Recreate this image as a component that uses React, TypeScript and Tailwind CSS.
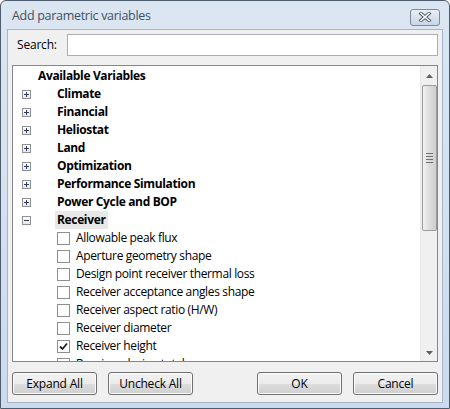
import React from 'react';

const font = { fontFamily: '"Segoe UI", "Open Sans", "Noto Sans", sans-serif' };

const categories = [
  'Climate',
  'Financial',
  'Heliostat',
  'Land',
  'Optimization',
  'Performance Simulation',
  'Power Cycle and BOP',
];

const receiverVars: { label: string; checked?: boolean }[] = [
  { label: 'Allowable peak flux' },
  { label: 'Aperture geometry shape' },
  { label: 'Design point receiver thermal loss' },
  { label: 'Receiver acceptance angles shape' },
  { label: 'Receiver aspect ratio (H/W)' },
  { label: 'Receiver diameter' },
  { label: 'Receiver height', checked: true },
  { label: 'Receiver design total ...' },
];

function ExpandBox({ open }: { open?: boolean }) {
  return (
    <span className="w-[9px] h-[9px] border border-[#919191] bg-gradient-to-b from-white to-[#e6e6e6] relative flex items-center justify-center">
      <span className="absolute w-[5px] h-px bg-[#2a3a5c]" />
      {!open && <span className="absolute w-px h-[5px] bg-[#2a3a5c]" />}
    </span>
  );
}

function CheckBox({ checked }: { checked?: boolean }) {
  return (
    <span className="w-[13px] h-[13px] border border-[#8e8f8f] bg-white flex items-center justify-center">
      {checked && (
        <svg width="9" height="9" viewBox="0 0 9 9">
          <path d="M1 4.5 L3.5 7 L8 1.5" fill="none" stroke="#1e1e1e" strokeWidth="1.8" />
        </svg>
      )}
    </span>
  );
}

function Button({ children }: { children: React.ReactNode }) {
  return (
    <button className="w-[85px] h-[23px] rounded-[3px] border border-[#707070] text-[12px] tracking-[-0.2px] text-black flex items-center justify-center bg-[linear-gradient(to_bottom,#f2f2f2_0%,#ebebeb_50%,#dddddd_50%,#cfcfcf_100%)] shadow-[inset_0_0_0_1px_#fbfbfb]">
      {children}
    </button>
  );
}

export default function App() {
  return (
    <div className="w-[450px] h-[409px] overflow-hidden bg-white" style={font}>
      <div className="w-[450px] h-[409px] rounded-t-[6px] border border-[#4e5d6e] bg-gradient-to-b from-[#dbe6f2] to-[#cbdbed] flex flex-col">
        {/* Title bar */}
        <div className="h-[28px] flex items-center justify-between pl-[11px] pr-[9px]">
          <span className="text-[12.5px] tracking-[-0.3px] text-[#425063] pt-[2px]">Add parametric variables</span>
          <span className="w-[30px] h-[17px] mt-[4px] rounded-[3px] border border-[#7d8a9b] bg-gradient-to-b from-[#e8eef6] to-[#c9d6e5] flex items-center justify-center">
            <svg width="14" height="10" viewBox="0 0 14 10">
              <path d="M3 1.5 L11 8.5 M11 1.5 L3 8.5" stroke="#4a5564" strokeWidth="3.4" strokeLinecap="square" />
              <path d="M3 1.5 L11 8.5 M11 1.5 L3 8.5" stroke="#ffffff" strokeWidth="1.6" strokeLinecap="square" />
            </svg>
          </span>
        </div>

        {/* Client area */}
        <div className="mx-[6px] mb-[5px] flex-1 border border-[#a6b6c8] bg-[#f0f0f0] flex flex-col pl-[4px] pr-[4px]">
          {/* Search */}
          <div className="flex items-center h-[27px] mt-px">
            <span className="w-[55px] pl-[5px] text-[12px] tracking-[-0.2px] text-black">Search:</span>
            <div className="flex-1 h-[22px] border border-[#abadb3] bg-white" />
          </div>

          {/* Tree */}
          <div className="mt-[7px] h-[297px] border border-[#828790] bg-white flex overflow-hidden">
            <div className="flex-1 pt-px overflow-hidden text-[12px] tracking-[-0.35px] text-black">
              <div className="h-[18px] flex items-center pl-[25px] font-bold">Available Variables</div>
              {categories.map(c => (
                <div key={c} className="h-[18px] flex items-center">
                  <span className="w-[44px] pl-[9px] flex"><ExpandBox /></span>
                  <span className="font-bold">{c}</span>
                </div>
              ))}
              <div className="h-[18px] flex items-center">
                <span className="w-[42px] pl-[9px] flex"><ExpandBox open /></span>
                <span className="font-bold bg-[#e8e8e8] h-[18px] px-[2px] flex items-center">Receiver</span>
              </div>
              {receiverVars.map(v => (
                <div key={v.label} className="h-[18px] flex items-center pl-[44px] gap-[6px]">
                  <CheckBox checked={v.checked} />
                  <span>{v.label}</span>
                </div>
              ))}
            </div>

            {/* Scrollbar */}
            <div className="w-[17px] bg-[#f0f0f0] border-l border-[#e8e8e8] flex flex-col items-center">
              <div className="h-[19px] flex items-center justify-center">
                <svg width="7" height="4" viewBox="0 0 7 4"><path d="M0 4 L3.5 0 L7 4 Z" fill="#606060" /></svg>
              </div>
              <div className="w-[15px] h-[146px] rounded-[2px] border border-[#9a9a9a] bg-gradient-to-r from-[#f2f2f2] via-[#dcdcdc] to-[#cfcfcf] flex flex-col items-center justify-center gap-[2px]">
                <span className="w-[7px] h-px bg-[#707070]" />
                <span className="w-[7px] h-px bg-[#707070]" />
                <span className="w-[7px] h-px bg-[#707070]" />
                <span className="w-[7px] h-px bg-[#707070]" />
              </div>
              <div className="flex-1" />
              <div className="h-[16px] flex items-center justify-center">
                <svg width="7" height="4" viewBox="0 0 7 4"><path d="M0 0 L3.5 4 L7 0 Z" fill="#606060" /></svg>
              </div>
            </div>
          </div>

          {/* Buttons */}
          <div className="flex items-center mt-[10px] gap-[11px]">
            <Button>Expand All</Button>
            <Button>Uncheck All</Button>
            <div className="flex-1" />
            <Button>OK</Button>
            <Button>Cancel</Button>
          </div>
        </div>
      </div>
    </div>
  );
}
